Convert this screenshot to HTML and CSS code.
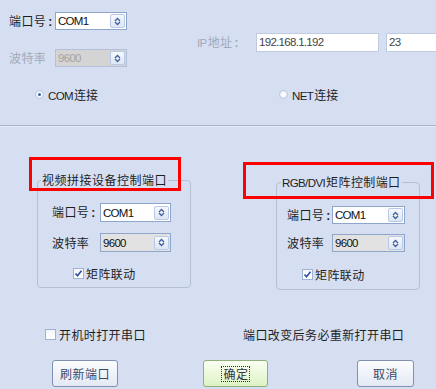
FILE: index.html
```html
<!DOCTYPE html>
<html>
<head>
<meta charset="utf-8">
<link rel="stylesheet" href="styles.css">
</head>
<body>
<div class="dlg">
  <div class="top">
    <div class="fields">
      <div class="left">
        <div class="row r1">
          <span class="lbl">端口号<span class="colon">:</span></span>
          <div class="combo">
            <span class="val">COM1</span>
            <span class="cbtn"><svg width="7" height="9" viewBox="0 0 7 9"><path d="M1 4 L3.5 1.5 L6 4 M1 5 L3.5 7.5 L6 5" fill="none" stroke="#40609a" stroke-width="1.3"/></svg></span>
          </div>
        </div>
        <div class="row r2">
          <span class="lbl dim">波特率</span>
          <div class="combo disabled">
            <span class="val">9600</span>
            <span class="cbtn"><svg width="7" height="9" viewBox="0 0 7 9"><path d="M1 4 L3.5 1.5 L6 4 M1 5 L3.5 7.5 L6 5" fill="none" stroke="#40609a" stroke-width="1.3"/></svg></span>
          </div>
        </div>
      </div>
      <div class="right">
        <span class="lbl dim iplbl"><span class="nar">IP</span>地址<span class="colon">:</span></span>
        <div class="edit ip">192.168.1.192</div>
        <div class="edit port">23</div>
      </div>
    </div>
    <div class="radios">
      <div class="radio com"><span class="dot on"></span><span><span class="nar">COM</span>连接</span></div>
      <div class="radio"><span class="dot"></span><span><span class="nar">NET</span>连接</span></div>
    </div>
  </div>
  <div class="sep"></div>
  <div class="groups">
    <div class="group g1">
      <div class="gtitle">视频拼接设备控制端口</div>
      <div class="grow first">
        <span class="lbl glbl">端口号<span class="colon">:</span></span>
        <div class="combo gcombo">
          <span class="val">COM1</span>
          <span class="cbtn"><svg width="7" height="9" viewBox="0 0 7 9"><path d="M1 4 L3.5 1.5 L6 4 M1 5 L3.5 7.5 L6 5" fill="none" stroke="#40609a" stroke-width="1.3"/></svg></span>
        </div>
      </div>
      <div class="grow second">
        <span class="lbl glbl">波特率</span>
        <div class="combo gcombo ro">
          <span class="val">9600</span>
          <span class="cbtn"><svg width="7" height="9" viewBox="0 0 7 9"><path d="M1 4 L3.5 1.5 L6 4 M1 5 L3.5 7.5 L6 5" fill="none" stroke="#40609a" stroke-width="1.3"/></svg></span>
        </div>
      </div>
      <div class="check gcheck">
        <span class="box"><svg width="9" height="9" viewBox="0 0 9 9"><path d="M1.5 4.5 L3.5 6.8 L7.5 1.8" fill="none" stroke="#2f4d9a" stroke-width="1.6"/></svg></span>
        <span class="ctext">矩阵联动</span>
      </div>
    </div>
    <div class="group g2">
      <div class="gtitle"><span class="nar">RGB/DVI</span>矩阵控制端口</div>
      <div class="grow first">
        <span class="lbl glbl">端口号<span class="colon">:</span></span>
        <div class="combo gcombo">
          <span class="val">COM1</span>
          <span class="cbtn"><svg width="7" height="9" viewBox="0 0 7 9"><path d="M1 4 L3.5 1.5 L6 4 M1 5 L3.5 7.5 L6 5" fill="none" stroke="#40609a" stroke-width="1.3"/></svg></span>
        </div>
      </div>
      <div class="grow second">
        <span class="lbl glbl">波特率</span>
        <div class="combo gcombo ro">
          <span class="val">9600</span>
          <span class="cbtn"><svg width="7" height="9" viewBox="0 0 7 9"><path d="M1 4 L3.5 1.5 L6 4 M1 5 L3.5 7.5 L6 5" fill="none" stroke="#40609a" stroke-width="1.3"/></svg></span>
        </div>
      </div>
      <div class="check gcheck">
        <span class="box"><svg width="9" height="9" viewBox="0 0 9 9"><path d="M1.5 4.5 L3.5 6.8 L7.5 1.8" fill="none" stroke="#2f4d9a" stroke-width="1.6"/></svg></span>
        <span class="ctext">矩阵联动</span>
      </div>
    </div>
  </div>
  <div class="opts">
    <div class="check startup">
      <span class="box"></span>
      <span class="ctext">开机时打开串口</span>
    </div>
    <div class="notice">端口改变后务必重新打开串口</div>
  </div>
  <div class="buttons">
    <div class="pbtn refresh">刷新端口</div>
    <div class="pbtn ok"><span class="focus">确定</span></div>
    <div class="pbtn cancel">取消</div>
  </div>
  <div class="mark m1"></div>
  <div class="mark m2"></div>
</div>
</body>
</html>
```
FILE: styles.css
```css
html, body {
  margin: 0;
  padding: 0;
}
body {
  background: #d6dff2;
  font-family: "Noto Sans CJK SC", sans-serif;
  font-size: 12px;
  color: #1e1e1e;
}
.dlg {
  position: relative;
  width: 436px;
  height: 389px;
  overflow: hidden;
}
.nar {
  font-family: "Liberation Sans", sans-serif;
  font-size: 11.5px;
  letter-spacing: -0.6px;
  margin-right: 1px;
}
.colon {
  font-family: "Liberation Sans", sans-serif;
  font-weight: bold;
  margin-left: 2px;
}
.top {
  height: 125px;
}
.fields {
  display: flex;
}
.left {
  flex: none;
  width: 197px;
  padding-left: 9px;
  box-sizing: border-box;
}
.row {
  display: flex;
  align-items: center;
  height: 18px;
}
.r1 { margin-top: 12px; }
.r2 { margin-top: 19px; }
.lbl {
  flex: none;
  width: 46px;
  white-space: nowrap;
  letter-spacing: 0.4px;
  line-height: 14px;
}
.dim { color: #a3a9b8; }
.combo {
  flex: none;
  display: flex;
  align-items: center;
  box-sizing: border-box;
  width: 72px;
  height: 18px;
  border: 1px solid #8ea6cc;
  background: #fff;
}
.combo .val {
  flex: 1;
  padding-left: 2px;
  font-family: "Liberation Sans", sans-serif;
  font-size: 11.5px;
  letter-spacing: -0.7px;
  line-height: 14px;
  color: #111;
}
.combo.disabled {
  background: #d4d4d4;
  border-color: #b4c0d8;
}
.combo.disabled .val { color: #a4a4a4; }
.cbtn {
  flex: none;
  box-sizing: border-box;
  width: 15px;
  height: 14px;
  margin-right: 1px;
  border: 1px solid #b9c9e6;
  border-radius: 2px;
  background: linear-gradient(#f6f8fd, #dde6f6);
  display: flex;
  align-items: center;
  justify-content: center;
}
.right {
  display: flex;
  align-items: center;
  padding-top: 33px;
  height: 19px;
}
.iplbl { width: 59px; }
.edit {
  flex: none;
  box-sizing: border-box;
  height: 19px;
  border: 1px solid #c0cbe0;
  background: #fff;
  font-family: "Liberation Sans", sans-serif;
  font-size: 11.5px;
  letter-spacing: -0.7px;
  line-height: 17px;
  padding-left: 2px;
  color: #444;
}
.ip { width: 123px; }
.port { width: 60px; margin-left: 7px; }
.radios {
  display: flex;
  align-items: center;
  height: 14px;
  margin-top: 20px;
  padding-left: 35px;
}
.radio {
  display: flex;
  align-items: center;
  gap: 4px;
  white-space: nowrap;
}
.radio.com { width: 244px; flex: none; }
.dot {
  box-sizing: border-box;
  width: 9px;
  height: 9px;
  border-radius: 50%;
  border: 1px solid #b8c4dc;
  background: radial-gradient(#ffffff, #e8edf6);
  display: flex;
  align-items: center;
  justify-content: center;
}
.dot.on::after {
  content: "";
  width: 3px;
  height: 3px;
  border-radius: 50%;
  background: #3d5fb0;
}
.sep {
  height: 1px;
  background: #aab5cd;
  border-bottom: 1px solid #e4eaf7;
}
.groups {
  display: flex;
  align-items: flex-start;
}
.group {
  flex: none;
  box-sizing: border-box;
  border: 1px solid #b5bfd2;
  border-radius: 4px;
}
.g1 {
  width: 154px;
  height: 108px;
  margin-top: 53px;
  margin-left: 37px;
}
.g2 {
  width: 144px;
  height: 108px;
  margin-top: 55px;
  margin-left: 85px;
}
.gtitle {
  display: block;
  width: fit-content;
  height: 14px;
  line-height: 14px;
  margin-top: -8px;
  margin-left: 3px;
  padding: 0 1px;
  background: #d6dff2;
  letter-spacing: 0.5px;
  white-space: nowrap;
}
.g2 .gtitle { margin-left: 4px; letter-spacing: 0.4px; }
.grow {
  display: flex;
  align-items: center;
  height: 19px;
}
.g1 .grow { padding-left: 14px; }
.g1 .glbl { width: 48px; }
.g1 .gcombo { width: 71px; height: 19px; }
.g1 .first { margin-top: 16px; }
.g1 .second { margin-top: 11px; }
.g2 .grow { padding-left: 10px; height: 18px; }
.g2 .glbl { width: 45px; }
.g2 .gcombo { width: 73px; height: 18px; }
.g2 .first { margin-top: 17px; }
.g2 .second { margin-top: 10px; }
.gcombo.ro { background: #e2e2e2; }
.check {
  display: flex;
  align-items: center;
  height: 11px;
}
.g1 .gcheck { margin-top: 16px; padding-left: 35px; }
.g2 .gcheck { margin-top: 17px; padding-left: 25px; }
.box {
  flex: none;
  box-sizing: border-box;
  width: 11px;
  height: 11px;
  border: 1px solid #9fb2d2;
  background: linear-gradient(#f4f6fa, #ffffff);
  display: flex;
  align-items: center;
  justify-content: center;
  margin-right: 2px;
}
.ctext {
  letter-spacing: 0.4px;
  line-height: 14px;
  white-space: nowrap;
}
.opts {
  display: flex;
  align-items: center;
  height: 13px;
  margin-top: 38px;
}
.startup { padding-left: 45px; width: 198px; flex: none; }
.startup .box { margin-right: 3px; }
.notice {
  letter-spacing: 0.4px;
  line-height: 14px;
  white-space: nowrap;
}
.buttons {
  display: flex;
  margin-top: 19px;
}
.pbtn {
  flex: none;
  box-sizing: border-box;
  height: 27px;
  border: 1px solid #8091ad;
  border-radius: 3px;
  background: linear-gradient(#fbfcfe, #e3e9f4);
  display: flex;
  align-items: center;
  justify-content: center;
  color: #3c4a66;
  letter-spacing: 0.5px;
}
.refresh { width: 66px; margin-left: 52px; }
.ok {
  width: 65px;
  margin-left: 85px;
  border-color: #8eb07a;
  background: linear-gradient(#fbfff2, #dcf3c4);
}
.focus {
  outline: 1px dotted #333;
  line-height: 14px;
  padding: 0 0 0 1px;
  color: #334;
}
.cancel { width: 57px; margin-left: 89px; }
.mark {
  position: absolute;
  border: 3px solid #ff0000;
  box-sizing: border-box;
}
.m1 { left: 29px; top: 157px; width: 152px; height: 34px; }
.m2 { left: 243px; top: 162px; width: 191px; height: 37px; }
```
